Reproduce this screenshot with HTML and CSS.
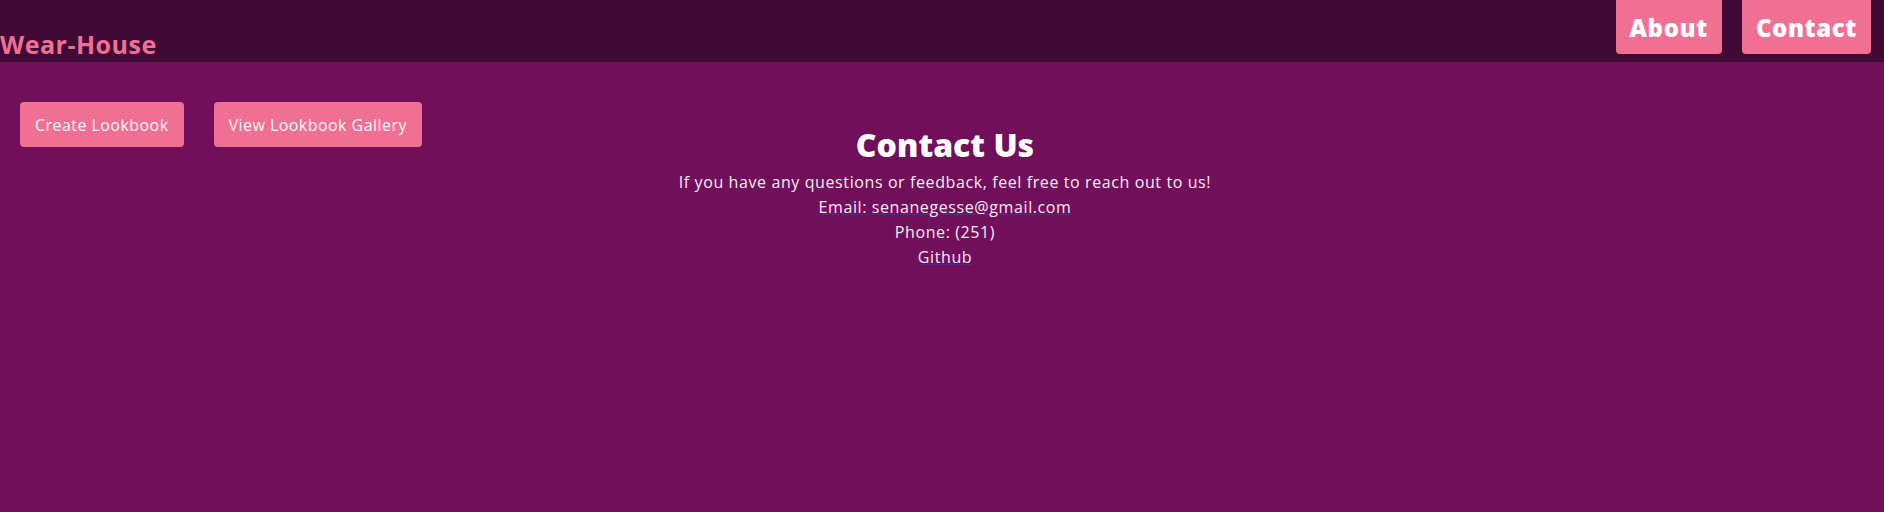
FILE: index.html
```html
<!DOCTYPE html>
<html lang="en">
<head>
<meta charset="utf-8">
<title>Wear-House — Contact</title>
<link rel="stylesheet" href="styles.css">
</head>
<body>
<header class="topbar">
  <div class="brand">Wear-House</div>
  <nav class="nav">
    <a class="nav-btn" href="#">About</a>
    <a class="nav-btn" href="#">Contact</a>
  </nav>
</header>
<main class="main">
  <div class="toolbar">
    <button class="tool-btn">Create Lookbook</button>
    <button class="tool-btn">View Lookbook Gallery</button>
  </div>
  <section class="contact">
    <h2 class="contact-title">Contact Us</h2>
    <p class="contact-line">If you have any questions or feedback, feel free to reach out to us!</p>
    <p class="contact-line"><a class="contact-link" href="#">Email: senanegesse@gmail.com</a></p>
    <p class="contact-line">Phone: (251)</p>
    <p class="contact-line"><a class="contact-link" href="#">Github</a></p>
  </section>
</main>
</body>
</html>
```
FILE: styles.css
```css
html, body {
  margin: 0;
  padding: 0;
  height: 100%;
}
body {
  font-family: "Open Sans", "Liberation Sans", sans-serif;
  background: #720f5a;
  color: #ffffff;
  display: flex;
  flex-direction: column;
}
.topbar {
  height: 62px;
  background: #410936;
  display: flex;
  justify-content: space-between;
  align-items: flex-end;
  flex: none;
}
.brand {
  font-size: 25px;
  font-weight: 700;
  color: #f07093;
  line-height: 32px;
  padding-bottom: 2px;
  letter-spacing: 0.5px;
}
.nav {
  align-self: flex-start;
  display: flex;
  gap: 20px;
  padding-right: 13px;
}
.nav-btn {
  display: flex;
  align-items: center;
  justify-content: center;
  height: 54px;
  padding: 0 14px;
  background: #f07093;
  color: #ffffff;
  font-size: 24px;
  font-weight: 800;
  letter-spacing: 0.6px;
  text-decoration: none;
  border-radius: 0 0 4px 4px;
}
.main {
  flex: 1;
  display: grid;
  align-content: start;
}
.toolbar {
  grid-area: 1 / 1;
  justify-self: start;
  align-self: start;
  display: flex;
  gap: 30px;
  padding: 40px 20px;
}
.tool-btn {
  height: 45px;
  padding: 0 15px;
  border: none;
  border-radius: 4px;
  background: #f07093;
  color: #fff6fa;
  font-family: inherit;
  font-size: 16px;
  letter-spacing: 0.45px;
  cursor: pointer;
}
.contact {
  grid-area: 1 / 1;
  text-align: center;
  padding-top: 58px;
  padding-left: 6px;
}
.contact-title {
  margin: 0;
  font-size: 32px;
  font-weight: 800;
  line-height: 50px;
}
.contact-line {
  margin: 0;
  font-size: 16px;
  line-height: 25px;
  letter-spacing: 0.6px;
  color: #f8ecf5;
}
.contact-link {
  color: inherit;
  text-decoration: underline;
  text-decoration-color: #4e2a8c;
}
```
